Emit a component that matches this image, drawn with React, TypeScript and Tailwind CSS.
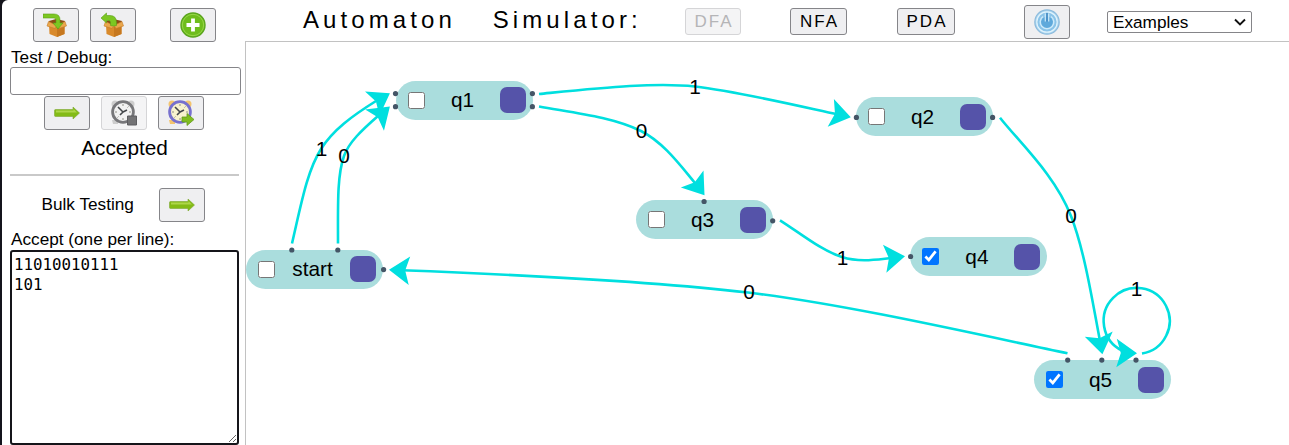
import type { ReactNode } from 'react';

type StateNode = { name: string; x: number; y: number; accept: boolean };
type Edge = { label: string; lx: number; ly: number; d: string; tip: [number, number]; angle: number };

const nodes: StateNode[] = [
  { name: 'start', x: 246, y: 249.6, accept: false },
  { name: 'q1', x: 396, y: 80.6, accept: false },
  { name: 'q2', x: 856, y: 97, accept: false },
  { name: 'q3', x: 636, y: 200.4, accept: false },
  { name: 'q4', x: 910.4, y: 237, accept: true },
  { name: 'q5', x: 1034, y: 360, accept: true },
];

const edges: Edge[] = [
  { label: '1', lx: 321.5, ly: 149, d: 'M292 243.5C301 205 307 171 321 149C333 130 352 116 376 101', tip: [389.9, 93.2], angle: -30.6 },
  { label: '0', lx: 344, ly: 155.5, d: 'M338 243.5C338 205 337 176 344 156C349 142 362 130 378 116', tip: [389.9, 106.5], angle: -41.5 },
  { label: '1', lx: 695, ly: 86.5, d: 'M539 94C600 88 655 82 695 86.5C735 91 790 104 838 114.5', tip: [850.8, 117.3], angle: 12.6 },
  { label: '0', lx: 641.5, ly: 130.5, d: 'M539 106.5C575 113 612 117 641 131C663 142 680 165 695 183', tip: [704.5, 195.3], angle: 53 },
  { label: '1', lx: 842.5, ly: 258, d: 'M780 220.3C800 233 822 251 842 257C860 263 880 259 892 258', tip: [905, 256.3], angle: -6.9 },
  { label: '0', lx: 1071, ly: 216, d: 'M1000 117.7C1020 143 1055 175 1071 216C1085 252 1093 305 1100 341', tip: [1102.4, 354.3], angle: 79.7 },
  { label: '0', lx: 749, ly: 292, d: 'M1067.5 353.3C980 335 850 305 748 292.5C650 281 500 274 402 270.3', tip: [389, 269.7], angle: 183 },
  { label: '1', lx: 1136.5, ly: 288.5, d: 'M1142 353.5A33 33 0 1 0 1122 350.5', tip: [1137, 353.3], angle: 1 },
];

const ports: [number, number][] = [
  [291.8, 250], [337.8, 250], [383.6, 269.6],
  [395.5, 93.6], [395.5, 106.7], [532.4, 93.6], [532.4, 106.7],
  [856.4, 117.4], [992.6, 117.4], [704.1, 201.5], [772.7, 220.8],
  [910.6, 256.5], [1067.7, 360.1], [1101.8, 360.1], [1136, 360.1],
];

function ToolButton({ children, disabled, label }: { children: ReactNode; disabled?: boolean; label: string }) {
  return (
    <button
      aria-label={label}
      disabled={disabled}
      className="flex h-[33.500px] w-[46px] shrink-0 items-center justify-center rounded-[3px] border border-[#858589] bg-[#efeff1] disabled:border-[#d5d5d7] disabled:bg-[#f4f4f5]"
    >
      {children}
    </button>
  );
}

function BoxIcon({ out }: { out?: boolean }) {
  return (
    <svg width="26" height="26" viewBox="0 0 26 26">
      <path d="M6 9l7-2 9 2-1 5H7z" fill="#8a4c16" />
      <path d="M6 12.500l8 2 7.500-2V22L14 25 6.500 22z" fill="#d98a2c" />
      <path d="M14 14.500l7.500-2V22L14 25z" fill="#c67820" />
      <path d="M5.500 9.500L4 14l8 2.500 2-3zM22 9.500l1.500 4.500-7.500 2.500-2-3z" fill="#eaa74d" stroke="#c27b28" strokeWidth=".6" />
      {out ? (
        <path d="M1 6l5.500-5v2.500H10q6.500 0 6.500 7v3q-3 1.200-6 0v-3q0-2-2-2h-2V11z" fill="#7cc722" stroke="#5ba018" strokeWidth=".6" />
      ) : (
        <path d="M0 2h11q6 0 6 6v3h3l-5 6-5-6h3V8q0-2-2-2H0z" fill="#7cc722" stroke="#5ba018" strokeWidth=".6" />
      )}
    </svg>
  );
}

function ArrowIcon() {
  return (
    <svg width="28" height="16" viewBox="0 0 28 16">
      <path d="M1.500 5.500q0-1 1-1H20V2l6.500 6-6.500 6v-2.500H2.500q-1 0-1-1z" fill="#83bb16" stroke="#7da834" strokeWidth=".6" />
      <path d="M3 5.500h17.500V4L24 7.500H3z" fill="#aed64a" />
    </svg>
  );
}

function ClockIcon({ gray }: { gray?: boolean }) {
  return (
    <svg width="28" height="28" viewBox="0 0 28 28">
      <g fill={gray ? '#cdcdcd' : '#f4c46e'}>
        <circle cx="5" cy="5" r="3.500" />
        <circle cx="21" cy="5" r="3.500" />
        <path d="M2 21h6v4H3z" />
      </g>
      <circle cx="13" cy="13" r="10.400" fill={gray ? '#f2f2f2' : '#f8f2cf'} stroke={gray ? '#77777a' : '#7770ce'} strokeWidth="2.800" />
      <path d="M13 5v2M13 19v2M5 13h2M19 13h2M18.500 7.500l-1 1M7.500 18.500l1-1" stroke="#909086" strokeWidth="1" />
      <path d="M8 8l5 5M13 13l4-2M13 13l-3 3" fill="none" stroke="#44474a" strokeWidth="1.600" />
      {gray ? (
        <path d="M17.500 17h9v9h-9z" fill="#737375" stroke="#5d5d60" />
      ) : (
        <path d="M15 18H20V14.500l7 6-7 6v-3.500H15z" fill="#80bd20" stroke="#639a1d" strokeWidth=".8" />
      )}
    </svg>
  );
}

function AddIcon() {
  return (
    <svg width="28" height="28" viewBox="0 0 28 28">
      <circle cx="14" cy="14" r="12" fill="#6ebd1c" stroke="#5ba51f" strokeWidth="1.400" />
      <circle cx="14" cy="14" r="10.700" fill="none" stroke="#99d74a" strokeWidth="1" />
      <path d="M14 7.500v13M7.500 14h13" stroke="#fff" strokeWidth="3.800" />
    </svg>
  );
}

function PowerIcon() {
  return (
    <svg width="28" height="28" viewBox="0 0 28 28">
      <circle cx="14" cy="14" r="12.200" fill="#a9d4ef" stroke="#8dbbdc" strokeWidth="1.200" />
      <circle cx="14" cy="14" r="10.200" fill="#8ac3e8" stroke="#e0f3fc" strokeWidth="1.200" />
      <circle cx="14" cy="14.500" r="6" fill="#5fa9db" />
      <path d="M10 8.500a6.800 6.800 0 1 0 8 0" fill="none" stroke="#cdeafa" strokeWidth="1.500" />
      <path d="M12.300 5.500v8M15.700 5.500v8" stroke="#cdeafa" strokeWidth="1.200" />
      <path d="M14 5v8.500" stroke="#4b91c8" strokeWidth="1.800" />
    </svg>
  );
}

function Node({ node }: { node: StateNode }) {
  return (
    <div
      className="absolute flex h-[39px] w-[136.500px] items-center rounded-[20px] bg-[#aadddd] pl-3 pr-[6.500px]"
      style={{ left: node.x, top: node.y }}
    >
      <input type="checkbox" readOnly checked={node.accept} className="m-0 size-[17px] shrink-0" />
      <span className="flex-1 text-center text-[20.8px] leading-[38px]">{node.name}</span>
      <span className="size-[26px] shrink-0 rounded-[7px] bg-[#5553a9]" />
    </div>
  );
}

function Diagram() {
  return (
    <>
      {nodes.map((n) => (
        <Node key={n.name} node={n} />
      ))}
      <svg className="pointer-events-none absolute left-0 top-0" width="1289" height="445" viewBox="0 0 1289 445">
        {edges.map((e) => (
          <g key={e.d}>
            <path d={e.d} fill="none" stroke="#00dfdf" strokeWidth="2.600" />
            <path d="M0 0L-20.500 -14.200L-16.200 0L-20.500 14.200Z" fill="#00dfdf" transform={`translate(${e.tip[0]} ${e.tip[1]}) rotate(${e.angle})`} />
          </g>
        ))}
        {ports.map(([x, y]) => (
          <circle key={`${x}-${y}`} cx={x} cy={y} r="2.600" fill="#445566" />
        ))}
        {edges.map((e) => (
          <text key={e.d} x={e.lx} y={e.ly + 7.3} textAnchor="middle" fontSize="20.800" fill="#000">
            {e.label}
          </text>
        ))}
      </svg>
    </>
  );
}

const modeButton =
  'h-[27px] rounded-[3px] border border-[#858589] bg-[#efeff1] pl-[2px] text-center text-[17px] leading-[25px] tracking-[2px] disabled:border-[#d5d5d7] disabled:bg-[#f4f4f5] disabled:text-[#b5b5b7]';

export default function App() {
  return (
    <div className="relative flex h-[445px] w-[1289px] overflow-hidden bg-[#14141c] font-['Liberation_Sans',Arial,sans-serif] text-black">
      <aside className="ml-[2px] flex w-[243px] shrink-0 flex-col rounded-tl-[6px] bg-white pl-2">
        <div className="flex pl-[22.500px] pt-2">
          <ToolButton label="Load"><BoxIcon /></ToolButton>
          <div className="ml-[11px]"><ToolButton label="Save"><BoxIcon out /></ToolButton></div>
          <div className="ml-[34px]"><ToolButton label="Add state"><AddIcon /></ToolButton></div>
        </div>
        <label className="mt-[5px] h-[20.500px] pl-px text-[17.2px] leading-5">Test / Debug:</label>
        <input aria-label="Test input" className="h-[28px] w-[231px] shrink-0 rounded-[3px] border border-[#858589] bg-white" />
        <div className="mt-[1px] flex gap-[11px] pl-[34.400px]">
          <ToolButton label="Run"><ArrowIcon /></ToolButton>
          <ToolButton label="Stop" disabled><ClockIcon gray /></ToolButton>
          <ToolButton label="Step"><ClockIcon /></ToolButton>
        </div>
        <div className="mt-[6px] h-6 w-[229px] text-center text-[20.8px] leading-6">Accepted</div>
        <hr className="mt-[14px] w-[229px] border-t-2 border-[#c9c9c9]" />
        <div className="mt-[12.500px] flex items-center pl-[31.500px]">
          <span className="mb-[2px] w-[117.500px] text-[17.2px] leading-5">Bulk Testing</span>
          <ToolButton label="Run bulk tests"><ArrowIcon /></ToolButton>
        </div>
        <label className="mt-[7.500px] h-[21px] shrink-0 pl-px text-[17.2px] leading-5">Accept (one per line):</label>
        <textarea
          defaultValue={'11010010111\n101'}
          spellCheck={false}
          className="h-[195px] w-[229px] shrink-0 resize rounded-[3px] border-2 border-[#15151a] bg-white px-[2px] py-[3px] font-['DejaVu_Sans_Mono',monospace] text-[15.8px] leading-5 outline-none"
        />
      </aside>
      <main className="flex min-w-0 flex-1 flex-col bg-white">
        <header className="flex h-[41px] shrink-0 items-start">
          <h1 className="ml-[58px] mt-[6px] w-[382px] whitespace-nowrap text-[24px] leading-7 tracking-[4.100px] [word-spacing:26px]">Automaton Simulator:</h1>
          <button disabled className={`${modeButton} mt-2 w-[56px]`}>DFA</button>
          <button className={`${modeButton} ml-[49px] mt-2 w-[57px]`}>NFA</button>
          <button className={`${modeButton} ml-[50px] mt-2 w-[58px]`}>PDA</button>
          <div className="ml-[69px] mt-[5px]"><ToolButton label="Reset"><PowerIcon /></ToolButton></div>
          <div className="relative ml-[37px] mt-[11px] h-[22px] w-[145px]">
            <select aria-label="Examples" className="block h-full w-full appearance-none rounded-[2px] border border-[#858589] bg-white pl-[5px] text-[17.2px] leading-5">
              <option>Examples</option>
            </select>
            <svg className="pointer-events-none absolute right-[6px] top-[7px]" width="12" height="9" viewBox="0 0 12 9">
              <path d="M1 1.500l5 5 5-5" fill="none" stroke="#111" strokeWidth="1.900" />
            </svg>
          </div>
        </header>
        <div className="flex-1 border-l border-t border-[#c2c2c2]" />
      </main>
      <Diagram />
    </div>
  );
}
